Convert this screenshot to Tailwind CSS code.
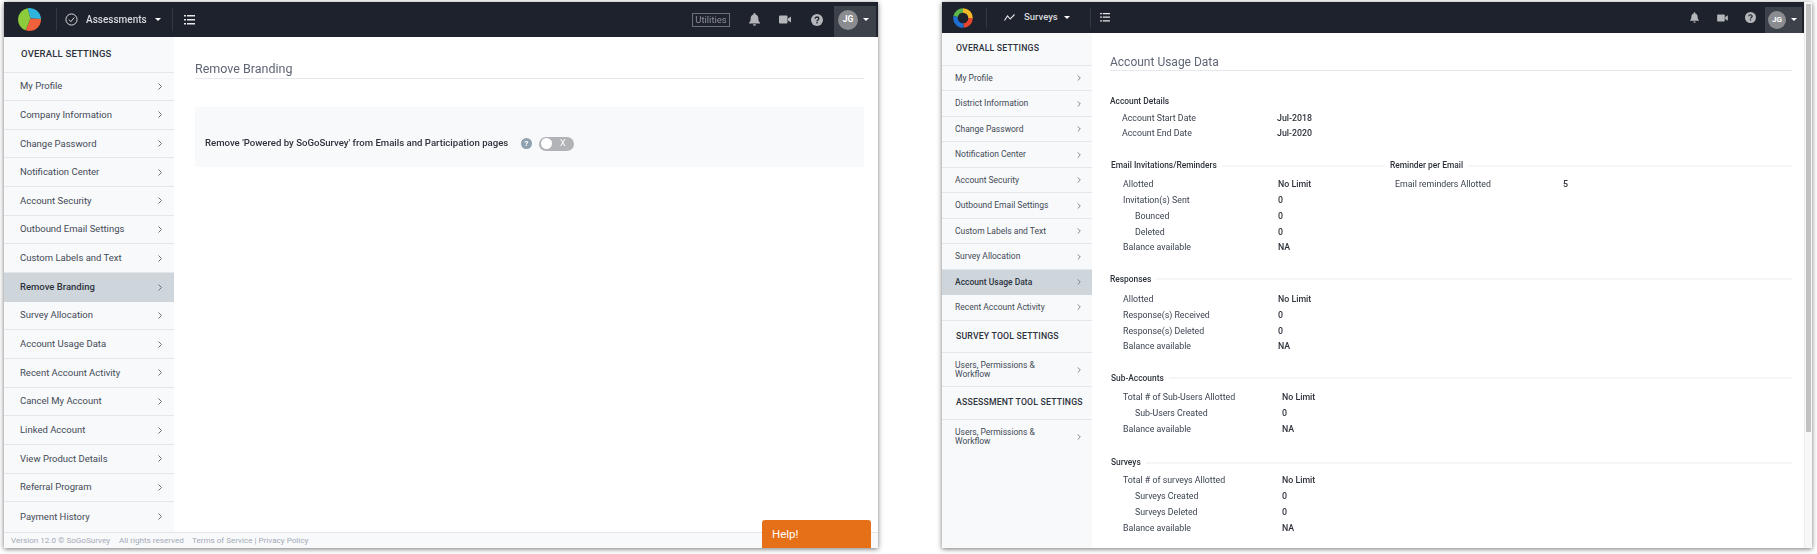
<!DOCTYPE html>
<html lang="en">
<head>
  <meta charset="UTF-8" />
  <title>Account settings</title>
  <script src="https://cdn.jsdelivr.net/npm/@tailwindcss/browser@4"></script>
</head>
<body class="bg-white h-[554px] w-[1817px] overflow-hidden font-['Roboto',sans-serif] text-[#3c4350]">

<div class="flex items-start pt-[2px] pl-[4px] blur-[0.4px]">

  <!-- left window: remove branding -->
  <div class="relative w-[874px] h-[546px] bg-white shadow-[0_1px_5px_rgba(0,0,0,0.55)] flex flex-col overflow-hidden">
    <header class="h-[35px] shrink-0 bg-[#1e222c] flex items-center text-white">
      <div class="w-[52px] pl-[14px] pb-[1px] shrink-0">
        <svg width="23" height="23" viewBox="0 0 24 24">
          <path d="M13 11 L10 .17 A12 12 0 0 1 24 11.500 Z" fill="#2fb4dd"/>
          <path d="M13 11 L24 11.500 A12 12 0 0 1 8 23.300 Z" fill="#f0603a"/>
          <path d="M13 11 L8 23.300 A12 12 0 0 1 10 .17 Z" fill="#8ccb3c"/>
        </svg>
      </div>
      <div class="w-px h-[23px] bg-[#33373f] shrink-0"></div>
      <svg class="ml-[8px]" width="13" height="13" viewBox="0 0 14 14" fill="none" stroke="#e8e8e8" stroke-width="1"><circle cx="7" cy="7" r="6"/><path d="M4.200 7.200 L6.300 9.300 L10 4.800"/></svg>
      <span class="ml-[8px] w-[56px] whitespace-nowrap text-[10px] font-medium text-[#d8dade]">Assessments</span>
      <span class="ml-[13px] border-x-[3px] border-t-[3px] border-x-transparent border-t-white"></span>
      <div class="ml-[11px] w-px h-[23px] bg-[#33373f]"></div>
      <svg class="ml-[11px]" width="11" height="10" viewBox="0 0 11 10" fill="#e8e8e8"><path d="M0 0h2v1.400H0zM3 0h8v1.400H3zM0 4h2v1.400H0zM3 4h8v1.400H3zM0 8h2v1.400H0zM3 8h8v1.400H3z"/></svg>
      <div class="ml-auto flex items-center h-full">
        <span class="w-[38px] h-[14px] border border-[#6b6f77] text-center leading-[12px] text-[9.500px] text-[#8b8f96]">Utilities</span>
        <svg class="ml-[19px]" width="11" height="13" viewBox="0 0 11 13" fill="#b4b6ba"><path d="M5.500 0a1 1 0 0 1 1 1v.5C8.400 2 9.300 3.500 9.300 5.500c0 2.500.7 3.300 1.700 4.300v.7H0v-.7c1-1 1.700-1.800 1.700-4.300 0-2 .9-3.500 2.800-4V1a1 1 0 0 1 1-1zM4 11.300h3A1.500 1.500 0 0 1 4 11.300z"/></svg>
        <svg class="ml-[19px]" width="12" height="9" viewBox="0 0 12 9" fill="#b4b6ba"><rect width="8.500" height="8" y=".5" rx="1"/><path d="M9 3.500 12 1.500v6L9 5.500z"/></svg>
        <svg class="ml-[20px]" width="12" height="12" viewBox="0 0 12 12"><circle cx="6" cy="6" r="6" fill="#b4b6ba"/><path d="M4.200 4.700C4.200 3.600 5 3 6 3s1.800.6 1.800 1.600c0 1.400-1.800 1.300-1.800 2.600" fill="none" stroke="#1e222c" stroke-width="1.300"/><rect x="5.300" y="8" width="1.400" height="1.400" fill="#1e222c"/></svg>
        <div class="ml-[11px] mr-[2px] mt-[4px] w-[42px] h-[31px] bg-[#3d414a] flex items-center pl-[4px] pb-[4px] self-start">
          <span class="w-[20px] h-[20px] rounded-full bg-[#8a8c90] text-[8.500px] font-bold text-white flex items-center justify-center">JG</span>
          <span class="ml-[5px] border-x-[3px] border-t-[3px] border-x-transparent border-t-white"></span>
        </div>
      </div>
    </header>

    <div class="flex flex-1 min-h-0">
      <aside class="w-[170px] shrink-0 bg-[#f8f9fb] text-[9.500px] text-[#434a56]">
        <div class="h-[35.500px] flex items-center pl-[17px] font-medium text-[9.500px] tracking-[0.2px] text-[#2d323b] border-b border-[#e4e6ea]">OVERALL SETTINGS</div>
        <a class="h-[28.670px] flex items-center justify-between pl-[16px] pr-[12px] border-b border-[#e4e6ea]">My Profile <svg width="4" height="7" viewBox="0 0 4 7" fill="none" stroke="#6c717b"><path d="M.5.5l3 3-3 3"/></svg></a>
        <a class="h-[28.670px] flex items-center justify-between pl-[16px] pr-[12px] border-b border-[#e4e6ea]">Company Information <svg width="4" height="7" viewBox="0 0 4 7" fill="none" stroke="#6c717b"><path d="M.5.5l3 3-3 3"/></svg></a>
        <a class="h-[28.670px] flex items-center justify-between pl-[16px] pr-[12px] border-b border-[#e4e6ea]">Change Password <svg width="4" height="7" viewBox="0 0 4 7" fill="none" stroke="#6c717b"><path d="M.5.5l3 3-3 3"/></svg></a>
        <a class="h-[28.670px] flex items-center justify-between pl-[16px] pr-[12px] border-b border-[#e4e6ea]">Notification Center <svg width="4" height="7" viewBox="0 0 4 7" fill="none" stroke="#6c717b"><path d="M.5.5l3 3-3 3"/></svg></a>
        <a class="h-[28.670px] flex items-center justify-between pl-[16px] pr-[12px] border-b border-[#e4e6ea]">Account Security <svg width="4" height="7" viewBox="0 0 4 7" fill="none" stroke="#6c717b"><path d="M.5.5l3 3-3 3"/></svg></a>
        <a class="h-[28.670px] flex items-center justify-between pl-[16px] pr-[12px] border-b border-[#e4e6ea]">Outbound Email Settings <svg width="4" height="7" viewBox="0 0 4 7" fill="none" stroke="#6c717b"><path d="M.5.5l3 3-3 3"/></svg></a>
        <a class="h-[28.670px] flex items-center justify-between pl-[16px] pr-[12px] border-b border-[#e4e6ea]">Custom Labels and Text <svg width="4" height="7" viewBox="0 0 4 7" fill="none" stroke="#6c717b"><path d="M.5.5l3 3-3 3"/></svg></a>
        <a class="h-[28.670px] flex items-center justify-between pl-[16px] pr-[12px] bg-[#ced6dc] font-medium text-[#2d323b]">Remove Branding <svg width="4" height="7" viewBox="0 0 4 7" fill="none" stroke="#6c717b"><path d="M.5.5l3 3-3 3"/></svg></a>
        <a class="h-[28.670px] flex items-center justify-between pl-[16px] pr-[12px] border-b border-[#e4e6ea]">Survey Allocation <svg width="4" height="7" viewBox="0 0 4 7" fill="none" stroke="#6c717b"><path d="M.5.5l3 3-3 3"/></svg></a>
        <a class="h-[28.670px] flex items-center justify-between pl-[16px] pr-[12px] border-b border-[#e4e6ea]">Account Usage Data <svg width="4" height="7" viewBox="0 0 4 7" fill="none" stroke="#6c717b"><path d="M.5.5l3 3-3 3"/></svg></a>
        <a class="h-[28.670px] flex items-center justify-between pl-[16px] pr-[12px] border-b border-[#e4e6ea]">Recent Account Activity <svg width="4" height="7" viewBox="0 0 4 7" fill="none" stroke="#6c717b"><path d="M.5.5l3 3-3 3"/></svg></a>
        <a class="h-[28.670px] flex items-center justify-between pl-[16px] pr-[12px] border-b border-[#e4e6ea]">Cancel My Account <svg width="4" height="7" viewBox="0 0 4 7" fill="none" stroke="#6c717b"><path d="M.5.5l3 3-3 3"/></svg></a>
        <a class="h-[28.670px] flex items-center justify-between pl-[16px] pr-[12px] border-b border-[#e4e6ea]">Linked Account <svg width="4" height="7" viewBox="0 0 4 7" fill="none" stroke="#6c717b"><path d="M.5.5l3 3-3 3"/></svg></a>
        <a class="h-[28.670px] flex items-center justify-between pl-[16px] pr-[12px] border-b border-[#e4e6ea]">View Product Details <svg width="4" height="7" viewBox="0 0 4 7" fill="none" stroke="#6c717b"><path d="M.5.5l3 3-3 3"/></svg></a>
        <a class="h-[28.670px] flex items-center justify-between pl-[16px] pr-[12px] border-b border-[#e4e6ea]">Referral Program <svg width="4" height="7" viewBox="0 0 4 7" fill="none" stroke="#6c717b"><path d="M.5.5l3 3-3 3"/></svg></a>
        <a class="h-[28.670px] flex items-center justify-between pl-[16px] pr-[12px]">Payment History <svg width="4" height="7" viewBox="0 0 4 7" fill="none" stroke="#6c717b"><path d="M.5.5l3 3-3 3"/></svg></a>
      </aside>

      <main class="flex-1 pl-[21px] pr-[14px] pt-[25px]">
        <h1 class="h-[17px] leading-[14px] text-[12.500px] text-[#5f6675] border-b border-[#e7e8eb]">Remove Branding</h1>
        <div class="mt-[28px] h-[60px] bg-[#f8f9fb] flex items-center pl-[10px] pt-[13px] text-[9.600px] font-medium text-[#2d323b]">
          <span class="w-[302px] whitespace-nowrap">Remove 'Powered by SoGoSurvey' from Emails and Participation pages</span>
          <span class="ml-[14px] w-[11px] h-[11px] rounded-full bg-[#8fa0ae] text-white text-[8px] font-bold flex items-center justify-center">?</span>
          <span class="ml-[7px] w-[35px] h-[14px] rounded-full bg-[#b1b3b7] flex items-center pl-[2px]">
            <span class="w-[11px] h-[11px] rounded-full bg-white"></span>
            <span class="ml-[8px] text-[9px] text-white font-normal">X</span>
          </span>
        </div>
      </main>
    </div>

    <footer class="absolute left-0 right-0 bottom-0 h-[16px] bg-[#f8f9fb] border-t border-[#e4e6ea] flex items-center pl-[7px] text-[8.100px] text-[#a4a9b6]">
      <span class="w-[99px] whitespace-nowrap">Version 12.0 © SoGoSurvey</span>
      <span class="ml-[9px] w-[65px] whitespace-nowrap">All rights reserved</span>
      <span class="ml-[8px] whitespace-nowrap">Terms of Service | Privacy Policy</span>
    </footer>
    <div class="absolute right-[7px] bottom-0 w-[109px] h-[28px] bg-[#e67018] rounded-t-[3px] pl-[10px] pt-[6px] text-[11.500px] text-white">Help!</div>
  </div>

  <!-- right window: account usage data -->
  <div class="ml-[64px] w-[870px] h-[546px] bg-white shadow-[0_1px_5px_rgba(0,0,0,0.55)] flex overflow-hidden">
    <div class="flex-1 min-w-0 flex flex-col">
    <header class="h-[31px] shrink-0 bg-[#1e222c] flex items-center text-white">
      <div class="w-[44px] pl-[11px] shrink-0">
        <svg width="20" height="20" viewBox="0 0 20 20" fill="none" stroke-width="4.500">
          <path d="M2.600 8.500A7.600 7.600 0 0 1 10 2.400" stroke="#5cb848"/>
          <path d="M10 2.400A7.600 7.600 0 0 1 17.600 10" stroke="#f4b827"/>
          <path d="M17.600 10A7.600 7.600 0 0 1 10.500 17.600" stroke="#e8452c"/>
          <path d="M10.500 17.600A7.600 7.600 0 0 1 2.600 8.500" stroke="#1f6fd0"/>
        </svg>
      </div>
      <div class="w-px h-[20px] bg-[#33373f] shrink-0"></div>
      <svg class="ml-[17px]" width="11" height="7" viewBox="0 0 11 7" fill="none" stroke="#e8e8e8" stroke-width="1.100"><path d="M.5 6.500 3.500 2l2.700 3L10.500 .5"/></svg>
      <span class="ml-[9px] w-[29px] text-[9.500px] font-medium text-[#d8dade]">Surveys</span>
      <span class="ml-[11px] border-x-[3px] border-t-[3px] border-x-transparent border-t-white"></span>
      <div class="ml-[20px] w-px h-[20px] bg-[#33373f]"></div>
      <svg class="ml-[9px]" width="10" height="9" viewBox="0 0 11 10" fill="#e8e8e8"><path d="M0 0h2v1.400H0zM3 0h8v1.400H3zM0 4h2v1.400H0zM3 4h8v1.400H3zM0 8h2v1.400H0zM3 8h8v1.400H3z"/></svg>
      <div class="ml-auto flex items-center h-full">
        <svg width="9" height="11" viewBox="0 0 11 13" fill="#b4b6ba"><path d="M5.500 0a1 1 0 0 1 1 1v.5C8.400 2 9.300 3.500 9.300 5.500c0 2.500.7 3.300 1.700 4.300v.7H0v-.7c1-1 1.700-1.800 1.700-4.300 0-2 .9-3.500 2.800-4V1a1 1 0 0 1 1-1zM4 11.300h3A1.500 1.500 0 0 1 4 11.300z"/></svg>
        <svg class="ml-[18px]" width="11" height="8" viewBox="0 0 12 9" fill="#b4b6ba"><rect width="8.500" height="8" y=".5" rx="1"/><path d="M9 3.500 12 1.500v6L9 5.500z"/></svg>
        <svg class="ml-[17px]" width="11" height="11" viewBox="0 0 12 12"><circle cx="6" cy="6" r="6" fill="#b4b6ba"/><path d="M4.200 4.700C4.200 3.600 5 3 6 3s1.800.6 1.800 1.600c0 1.400-1.800 1.300-1.800 2.600" fill="none" stroke="#1e222c" stroke-width="1.300"/><rect x="5.300" y="8" width="1.400" height="1.400" fill="#1e222c"/></svg>
        <div class="ml-[9px] mr-[2px] mt-[5px] w-[37px] h-[26px] bg-[#3d414a] flex items-center pl-[3px] pb-[1px] self-start">
          <span class="w-[18px] h-[18px] rounded-full bg-[#8a8c90] text-[8px] font-bold text-white flex items-center justify-center">JG</span>
          <span class="ml-[5px] border-x-[3px] border-t-[3px] border-x-transparent border-t-white"></span>
        </div>
      </div>
    </header>

    <div class="flex flex-1 min-h-0">
      <aside class="w-[150px] shrink-0 bg-[#f8f9fb] text-[8.500px] text-[#434a56]">
        <div class="h-[33px] flex items-center pl-[14px] font-medium text-[8.700px] tracking-[0.2px] text-[#2d323b] border-b border-[#e4e6ea] whitespace-nowrap">OVERALL SETTINGS</div>
        <a class="h-[25.470px] flex items-center justify-between pl-[13px] pr-[11px] border-b border-[#e4e6ea]">My Profile <svg width="4" height="6" viewBox="0 0 4 7" fill="none" stroke="#6c717b"><path d="M.5.5l3 3-3 3"/></svg></a>
        <a class="h-[25.470px] flex items-center justify-between pl-[13px] pr-[11px] border-b border-[#e4e6ea]">District Information <svg width="4" height="6" viewBox="0 0 4 7" fill="none" stroke="#6c717b"><path d="M.5.5l3 3-3 3"/></svg></a>
        <a class="h-[25.470px] flex items-center justify-between pl-[13px] pr-[11px] border-b border-[#e4e6ea]">Change Password <svg width="4" height="6" viewBox="0 0 4 7" fill="none" stroke="#6c717b"><path d="M.5.5l3 3-3 3"/></svg></a>
        <a class="h-[25.470px] flex items-center justify-between pl-[13px] pr-[11px] border-b border-[#e4e6ea]">Notification Center <svg width="4" height="6" viewBox="0 0 4 7" fill="none" stroke="#6c717b"><path d="M.5.5l3 3-3 3"/></svg></a>
        <a class="h-[25.470px] flex items-center justify-between pl-[13px] pr-[11px] border-b border-[#e4e6ea]">Account Security <svg width="4" height="6" viewBox="0 0 4 7" fill="none" stroke="#6c717b"><path d="M.5.5l3 3-3 3"/></svg></a>
        <a class="h-[25.470px] flex items-center justify-between pl-[13px] pr-[11px] border-b border-[#e4e6ea]">Outbound Email Settings <svg width="4" height="6" viewBox="0 0 4 7" fill="none" stroke="#6c717b"><path d="M.5.5l3 3-3 3"/></svg></a>
        <a class="h-[25.470px] flex items-center justify-between pl-[13px] pr-[11px] border-b border-[#e4e6ea]">Custom Labels and Text <svg width="4" height="6" viewBox="0 0 4 7" fill="none" stroke="#6c717b"><path d="M.5.5l3 3-3 3"/></svg></a>
        <a class="h-[25.470px] flex items-center justify-between pl-[13px] pr-[11px] border-b border-[#e4e6ea]">Survey Allocation <svg width="4" height="6" viewBox="0 0 4 7" fill="none" stroke="#6c717b"><path d="M.5.5l3 3-3 3"/></svg></a>
        <a class="h-[25.470px] flex items-center justify-between pl-[13px] pr-[11px] bg-[#ced6dc] font-medium text-[#2d323b]">Account Usage Data <svg width="4" height="6" viewBox="0 0 4 7" fill="none" stroke="#6c717b"><path d="M.5.5l3 3-3 3"/></svg></a>
        <a class="h-[25.470px] flex items-center justify-between pl-[13px] pr-[11px] border-b border-[#e4e6ea]">Recent Account Activity <svg width="4" height="6" viewBox="0 0 4 7" fill="none" stroke="#6c717b"><path d="M.5.5l3 3-3 3"/></svg></a>
        <div class="h-[32.500px] flex items-center pl-[14px] font-medium text-[8.700px] tracking-[0.2px] text-[#2d323b] border-b border-[#e4e6ea] whitespace-nowrap">SURVEY TOOL SETTINGS</div>
        <a class="h-[34px] flex items-center justify-between pl-[13px] pr-[11px] leading-[9px] border-b border-[#e4e6ea]"><span class="w-[90px]">Users, Permissions &amp; Workflow</span> <svg width="4" height="6" viewBox="0 0 4 7" fill="none" stroke="#6c717b"><path d="M.5.5l3 3-3 3"/></svg></a>
        <div class="h-[32.500px] flex items-center pl-[14px] font-medium text-[8.700px] tracking-[0.2px] text-[#2d323b] border-b border-[#e4e6ea] whitespace-nowrap">ASSESSMENT TOOL SETTINGS</div>
        <a class="h-[34px] flex items-center justify-between pl-[13px] pr-[11px] leading-[9px]"><span class="w-[90px]">Users, Permissions &amp; Workflow</span> <svg width="4" height="6" viewBox="0 0 4 7" fill="none" stroke="#6c717b"><path d="M.5.5l3 3-3 3"/></svg></a>
      </aside>

      <main class="flex-1 pl-[18px] pr-[12px] pt-[22px] text-[8.800px]">
        <h1 class="h-[16px] leading-[15px] text-[12px] text-[#5f6675] border-b border-[#e7e8eb]">Account Usage Data</h1>

        <section class="mt-[23px]">
          <h2 class="h-[15px] text-[8.400px] font-medium text-[#2d323b] flex items-center">Account Details</h2>
          <div class="mt-[2px] pl-[12px] grid grid-cols-[155px_1fr] auto-rows-[15px] items-center">
            <span>Account Start Date</span><b class="font-medium text-[#2d323b]">Jul-2018</b>
            <span>Account End Date</span><b class="font-medium text-[#2d323b]">Jul-2020</b>
          </div>
        </section>

        <div class="mt-[17px] flex gap-[6px]">
          <section class="w-[274px] pl-[1px]">
            <h2 class="h-[15px] text-[8.400px] font-medium text-[#2d323b] flex items-center gap-[5px] whitespace-nowrap">Email Invitations/Reminders <i class="flex-1 h-[2px] bg-[#f4f5f7]"></i></h2>
            <div class="mt-[4px] pl-[12px] grid grid-cols-[155px_1fr] auto-rows-[15.750px] items-center">
              <span>Allotted</span><b class="font-medium text-[#2d323b]">No Limit</b>
              <span>Invitation(s) Sent</span><b class="font-medium text-[#2d323b]">0</b>
              <span class="pl-[12px]">Bounced</span><b class="font-medium text-[#2d323b]">0</b>
              <span class="pl-[12px]">Deleted</span><b class="font-medium text-[#2d323b]">0</b>
              <span>Balance available</span><b class="font-medium text-[#2d323b]">NA</b>
            </div>
          </section>
          <section class="flex-1">
            <h2 class="h-[15px] text-[8.400px] font-medium text-[#2d323b] flex items-center gap-[5px] whitespace-nowrap">Reminder per Email <i class="flex-1 h-[2px] bg-[#f4f5f7]"></i></h2>
            <div class="mt-[4px] pl-[5px] grid grid-cols-[168px_1fr] auto-rows-[15.750px] items-center">
              <span>Email reminders Allotted</span><b class="font-medium text-[#2d323b]">5</b>
            </div>
          </section>
        </div>

        <section class="mt-[16px]">
          <h2 class="h-[15px] text-[8.400px] font-medium text-[#2d323b] flex items-center gap-[5px]">Responses <i class="flex-1 h-[2px] bg-[#f4f5f7]"></i></h2>
          <div class="mt-[5px] pl-[13px] grid grid-cols-[155px_1fr] auto-rows-[15.750px] items-center">
            <span>Allotted</span><b class="font-medium text-[#2d323b]">No Limit</b>
            <span>Response(s) Received</span><b class="font-medium text-[#2d323b]">0</b>
            <span>Response(s) Deleted</span><b class="font-medium text-[#2d323b]">0</b>
            <span>Balance available</span><b class="font-medium text-[#2d323b]">NA</b>
          </div>
        </section>

        <section class="mt-[16px] pl-[1px]">
          <h2 class="h-[15px] text-[8.400px] font-medium text-[#2d323b] flex items-center gap-[5px]">Sub-Accounts <i class="flex-1 h-[2px] bg-[#f4f5f7]"></i></h2>
          <div class="mt-[4px] pl-[12px] grid grid-cols-[159px_1fr] auto-rows-[15.750px] items-center">
            <span>Total # of Sub-Users Allotted</span><b class="font-medium text-[#2d323b]">No Limit</b>
            <span class="pl-[12px]">Sub-Users Created</span><b class="font-medium text-[#2d323b]">0</b>
            <span>Balance available</span><b class="font-medium text-[#2d323b]">NA</b>
          </div>
        </section>

        <section class="mt-[18px] pl-[1px]">
          <h2 class="h-[15px] text-[8.400px] font-medium text-[#2d323b] flex items-center gap-[5px]">Surveys <i class="flex-1 h-[2px] bg-[#f4f5f7]"></i></h2>
          <div class="mt-[3px] pl-[12px] grid grid-cols-[159px_1fr] auto-rows-[15.750px] items-center">
            <span>Total # of surveys Allotted</span><b class="font-medium text-[#2d323b]">No Limit</b>
            <span class="pl-[12px]">Surveys Created</span><b class="font-medium text-[#2d323b]">0</b>
            <span class="pl-[12px]">Surveys Deleted</span><b class="font-medium text-[#2d323b]">0</b>
            <span>Balance available</span><b class="font-medium text-[#2d323b]">NA</b>
          </div>
        </section>
      </main>
    </div>
    </div>
    <!-- scrollbar -->
    <div class="w-[8px] shrink-0 bg-[#f7f7f7] border-l border-[#ececec] pt-[2px] pl-[1px]">
      <div class="w-[5px] h-[428px] bg-[#c2c2c2] rounded-b-[1px]"></div>
    </div>
  </div>

</div>
</body>
</html>
